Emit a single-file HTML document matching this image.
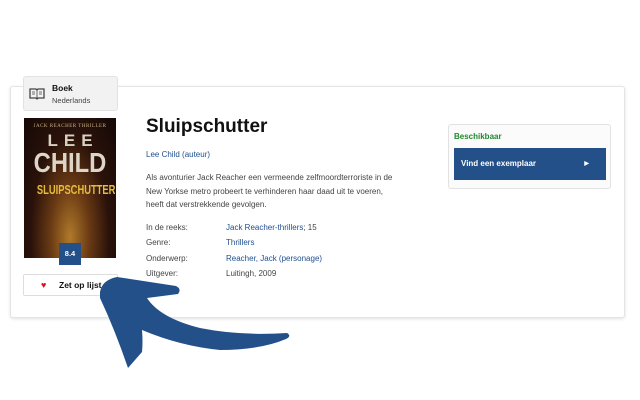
<!DOCTYPE html>
<html><head><meta charset="utf-8"><style>
*{margin:0;padding:0;box-sizing:border-box}
body{width:640px;height:400px;background:#fff;font-family:"Liberation Sans",sans-serif;position:relative;overflow:hidden;color:#333}
.card{position:absolute;left:10px;top:86px;width:615px;height:232px;border:1px solid #e4e4e4;border-radius:3px;box-shadow:0 1px 3px rgba(0,0,0,.12);background:#fff}
.tab{position:absolute;left:23px;top:76px;width:95px;height:35px;background:#f2f2f2;border:1px solid #e2e2e2;border-radius:3px}
.tab .t1{position:absolute;left:28px;top:6px;font-size:8.5px;font-weight:bold;color:#111}
.tab .t2{position:absolute;left:28px;top:19px;font-size:7.5px;color:#444}
.cover{position:absolute;left:24px;top:118px;width:92px;height:140px;background:radial-gradient(ellipse at 50% 85%,#b07a2a 0%,#6a3a14 30%,#2a120a 60%,#150806 100%);overflow:hidden}
.cover .a{position:absolute;top:6px;width:100%;text-align:center;font-family:"Liberation Serif",serif;font-size:5px;color:#c9b48a;letter-spacing:.5px}
.cover .b{position:absolute;top:13px;width:100%;text-align:center;font-weight:bold;font-size:17px;color:#d8d0c0;letter-spacing:6px;padding-left:6px}
.cover .c{position:absolute;top:29px;width:100%;text-align:center;font-weight:bold;font-size:28px;color:#ddd6c8;transform:scaleX(.85)}
.cover .d{position:absolute;top:64px;width:100%;text-align:center;font-weight:bold;font-size:13px;color:#e6bd3a;transform:scaleX(.72)}
.score{position:absolute;left:59px;top:243px;width:22px;height:22px;background:#24508a;color:#fff;font-size:7.5px;font-weight:bold;text-align:center;line-height:22px}
.btn{position:absolute;left:23px;top:274px;width:95px;height:22px;border:1px solid #ddd;border-radius:2px;background:#fff;font-size:8.5px;font-weight:bold;color:#111;line-height:20px;padding-left:35px}
.btn span{position:absolute;left:17px;top:0;color:#e0101a;font-size:9px}
h1{position:absolute;left:146px;top:116px;font-size:19px;font-weight:bold;color:#111}
.au{position:absolute;left:146px;top:150px;font-size:8px;color:#1f4f8f}
.desc{position:absolute;left:146px;top:171px;font-size:8px;line-height:13.5px;color:#444;width:300px;white-space:nowrap}
.row{position:absolute;left:146px;font-size:8px;color:#444}
.row b{font-weight:normal;position:absolute;left:80px;white-space:nowrap}
.lk{color:#1f4f8f}
.av{position:absolute;left:448px;top:124px;width:163px;height:65px;border:1px solid #e2e2e2;border-radius:3px;background:#fbfbfb}
.av .g{position:absolute;left:5px;top:7px;font-size:8px;font-weight:bold;color:#1d8a2a}
.av .bl{position:absolute;left:5px;top:23px;width:152px;height:32px;background:#24508a;color:#fff;font-size:8px;font-weight:bold;line-height:32px;padding-left:7px}
.av .bl i{position:absolute;right:17px;top:0;font-style:normal;font-size:6px}
</style></head><body>
<div class="card"></div>
<div class="tab">
<svg style="position:absolute;left:5px;top:10px" width="16" height="13" viewBox="0 0 16 13"><path d="M1 2h6l1 1 1-1h6v9H9l-1 1-1-1H1z" fill="none" stroke="#444" stroke-width="1.3"/><path d="M8 3v8M3 5h3M3 7h3M10 5h3M10 7h3" stroke="#444" stroke-width=".8"/></svg>
<div class="t1">Boek</div><div class="t2">Nederlands</div></div>
<div class="cover"><div class="a">JACK REACHER THRILLER</div><div class="b">LEE</div><div class="c">CHILD</div><div class="d">SLUIPSCHUTTER</div></div>
<div class="score">8.4</div>
<div class="btn"><span>♥</span>Zet op lijst</div>
<h1>Sluipschutter</h1>
<div class="au">Lee Child (auteur)</div>
<div class="desc">Als avonturier Jack Reacher een vermeende zelfmoordterroriste in de<br>New Yorkse metro probeert te verhinderen haar daad uit te voeren,<br>heeft dat verstrekkende gevolgen.</div>
<div class="row" style="top:223px">In de reeks:<b><span class="lk">Jack Reacher-thrillers</span>; 15</b></div>
<div class="row" style="top:238px">Genre:<b class="lk">Thrillers</b></div>
<div class="row" style="top:254px">Onderwerp:<b class="lk">Reacher, Jack (personage)</b></div>
<div class="row" style="top:269px">Uitgever:<b>Luitingh, 2009</b></div>
<div class="av"><div class="g">Beschikbaar</div><div class="bl">Vind een exemplaar<i>▶</i></div></div>
<svg style="position:absolute;left:0;top:0" width="640" height="400"><path d="M100 292 Q102 280 117 277 L176 286 Q182 289 178 294 L147 298 Q160 318 200 328 Q240 336 287 333 Q292 336 286 339 Q260 350 220 350 Q180 346 142 330 Q143 342 142 352 L128 368 Q115 330 100 298 Z" fill="#24508a"/></svg>
</body></html>
